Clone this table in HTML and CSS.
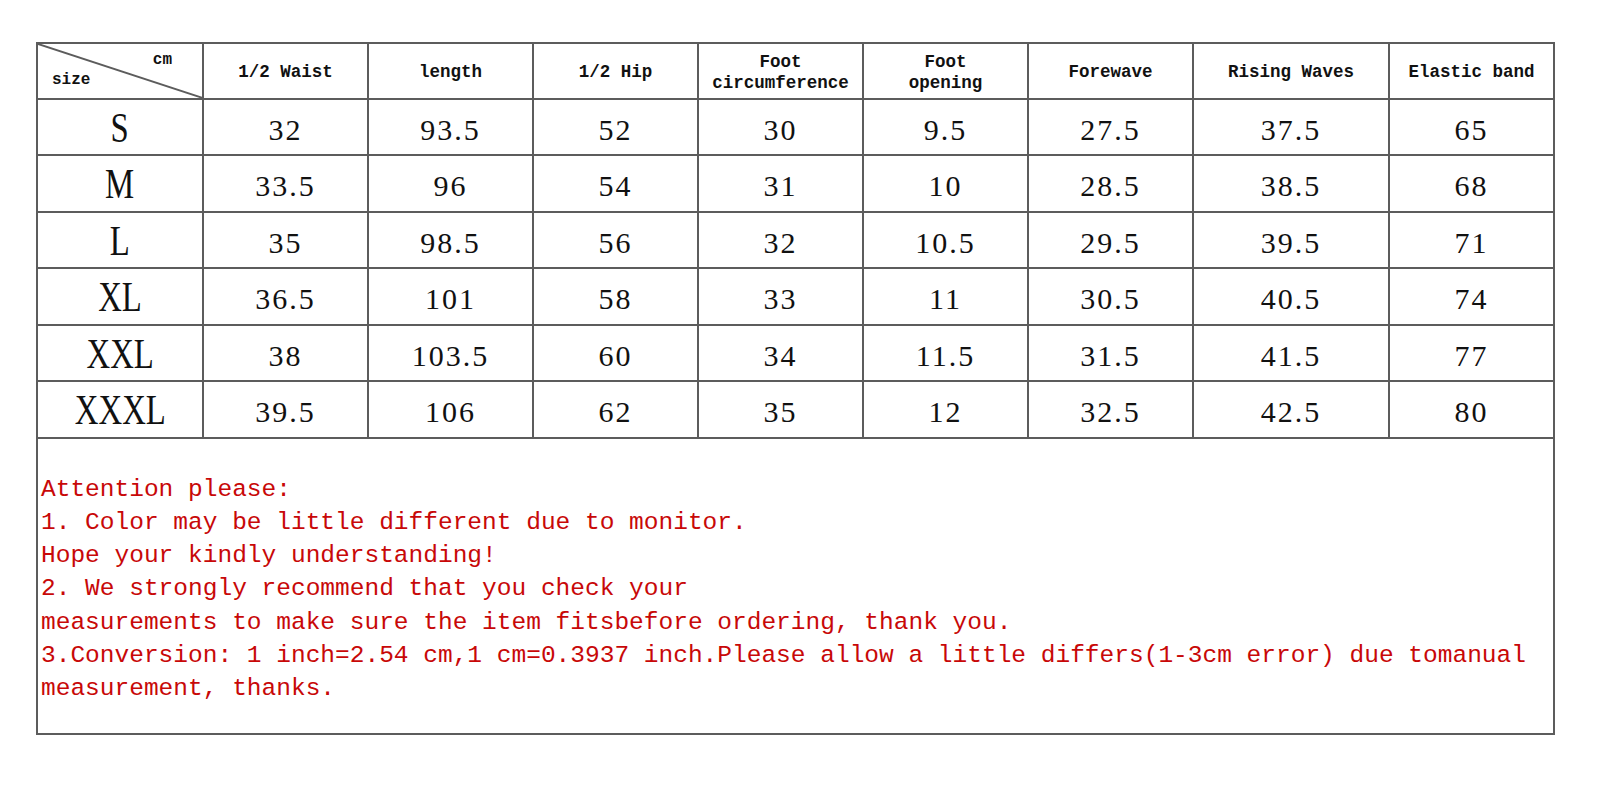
FILE: index.html
```html
<!DOCTYPE html>
<html lang="en">
<head>
<meta charset="utf-8">
<title>Size chart</title>
<link rel="stylesheet" href="styles.css">
</head>
<body>
<div class="sheet">
  <table class="chart">
    <colgroup>
      <col class="c-size">
      <col class="c-std">
      <col class="c-std">
      <col class="c-std">
      <col class="c-std">
      <col class="c-std">
      <col class="c-std">
      <col class="c-wide">
      <col class="c-std">
    </colgroup>
    <thead>
      <tr class="hdr">
        <th class="corner">
          <svg class="diag" viewBox="0 0 100 100" preserveAspectRatio="none" aria-hidden="true">
            <line x1="0" y1="0" x2="100" y2="100" vector-effect="non-scaling-stroke"></line>
          </svg>
          <span class="unit">cm</span>
          <span class="sz">size</span>
        </th>
        <th>1/2 Waist</th>
        <th>length</th>
        <th>1/2 Hip</th>
        <th>Foot<br>circumference</th>
        <th>Foot<br>opening</th>
        <th>Forewave</th>
        <th>Rising Waves</th>
        <th>Elastic band</th>
      </tr>
    </thead>
    <tbody>
      <tr><td class="lbl"><span>S</span></td><td>32</td><td>93.5</td><td>52</td><td>30</td><td>9.5</td><td>27.5</td><td>37.5</td><td>65</td></tr>
      <tr><td class="lbl"><span>M</span></td><td>33.5</td><td>96</td><td>54</td><td>31</td><td>10</td><td>28.5</td><td>38.5</td><td>68</td></tr>
      <tr><td class="lbl"><span>L</span></td><td>35</td><td>98.5</td><td>56</td><td>32</td><td>10.5</td><td>29.5</td><td>39.5</td><td>71</td></tr>
      <tr><td class="lbl"><span>XL</span></td><td>36.5</td><td>101</td><td>58</td><td>33</td><td>11</td><td>30.5</td><td>40.5</td><td>74</td></tr>
      <tr><td class="lbl"><span>XXL</span></td><td>38</td><td>103.5</td><td>60</td><td>34</td><td>11.5</td><td>31.5</td><td>41.5</td><td>77</td></tr>
      <tr><td class="lbl"><span>XXXL</span></td><td>39.5</td><td>106</td><td>62</td><td>35</td><td>12</td><td>32.5</td><td>42.5</td><td>80</td></tr>
    </tbody>
  </table>
  <div class="notes">
    <p>Attention please:</p>
    <p>1. Color may be little different due to monitor.</p>
    <p>Hope your kindly understanding!</p>
    <p>2. We strongly recommend that you check your</p>
    <p>measurements to make sure the item fitsbefore ordering, thank you.</p>
    <p>3.Conversion: 1 inch=2.54 cm,1 cm=0.3937 inch.Please allow a little differs(1-3cm error) due tomanual</p>
    <p>measurement, thanks.</p>
  </div>
</div>
</body>
</html>
```
FILE: styles.css
```css
html, body {
  margin: 0;
  padding: 0;
  background: #ffffff;
}

.sheet {
  width: 1519px;
  margin: 42px 0 0 36px;
}

.chart {
  width: 1519px;
  table-layout: fixed;
  border-collapse: collapse;
  border: 2px solid #5c5c5c;
}

.c-size { width: 166px; }
.c-std { width: 165px; }
.c-wide { width: 196px; }

.chart th,
.chart td {
  border: 2px solid #5c5c5c;
  padding: 0;
  text-align: center;
  vertical-align: middle;
  color: #111;
}

.chart th {
  height: 55.7px;
  font-family: "Liberation Mono", "DejaVu Sans Mono", monospace;
  font-weight: bold;
  font-size: 17.5px;
  line-height: 21px;
  padding-top: 4px;
  box-sizing: border-box;
}

.chart td {
  height: 56.5px;
  font-family: "Liberation Serif", "DejaVu Serif", serif;
  font-size: 30px;
  letter-spacing: 2px;
  line-height: 30px;
  padding-top: 6px;
  box-sizing: border-box;
}

.chart td.lbl span {
  display: inline-block;
  font-size: 42px;
  line-height: 42px;
  letter-spacing: 0;
  transform: scaleX(0.78);
}

.chart td.lbl {
  padding-top: 2px;
}

.corner {
  position: relative;
}

.diag {
  position: absolute;
  left: 0;
  top: 0;
  width: 100%;
  height: 100%;
}

.diag line {
  stroke: #5c5c5c;
  stroke-width: 2;
}

.unit,
.sz {
  position: absolute;
  font-size: 16px;
  line-height: 16px;
}

.unit {
  top: 8px;
  right: 30px;
}

.sz {
  top: 28px;
  left: 14px;
}

.notes {
  box-sizing: border-box;
  height: 296px;
  border: 2px solid #5c5c5c;
  border-top: none;
  padding: 34px 0 0 3px;
  color: #c80808;
  font-family: "Liberation Mono", "DejaVu Sans Mono", monospace;
  font-size: 24.5px;
  line-height: 33.2px;
}

.notes p {
  margin: 0;
  white-space: pre;
}
```
